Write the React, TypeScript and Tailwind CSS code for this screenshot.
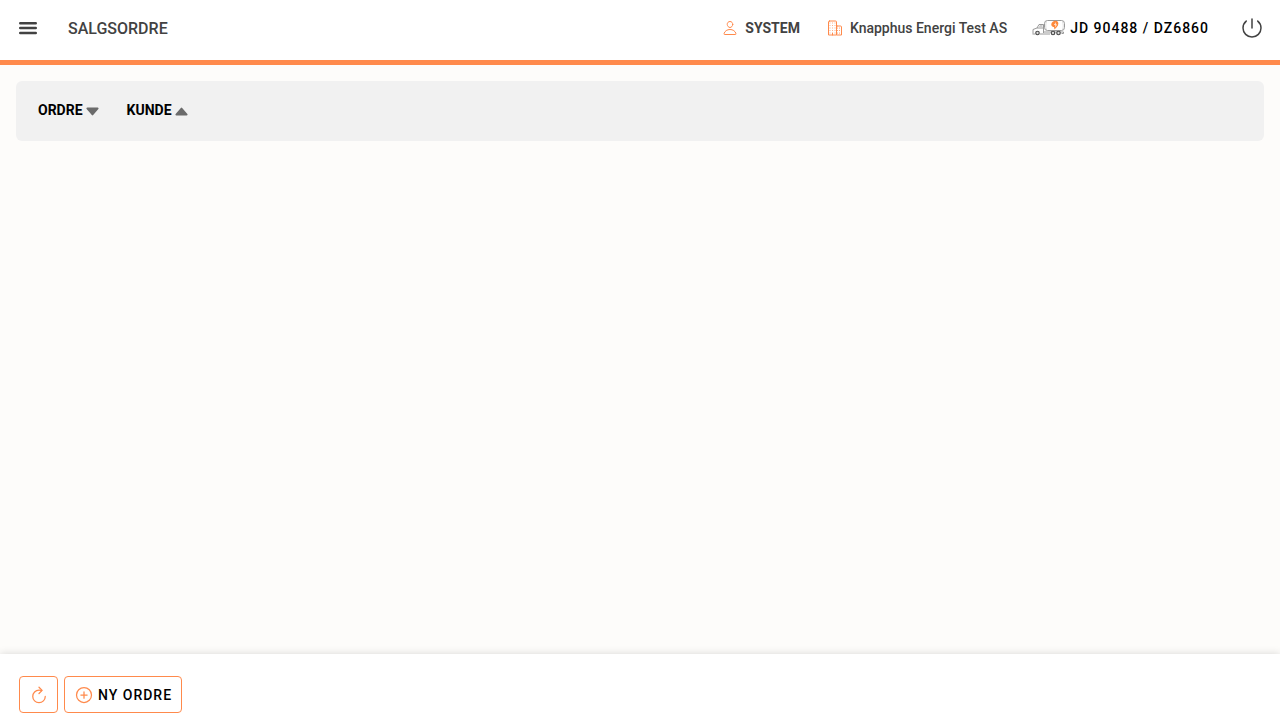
import {
    IoAddCircleOutline,
    IoBusinessOutline,
    IoCaretDown,
    IoCaretUp,
    IoPersonOutline,
    IoPowerOutline,
    IoRefreshOutline,
} from "react-icons/io5";

const MenuIcon = () => (
    <svg className="size-6" viewBox="0 0 24 24" fill="none" stroke="currentColor" strokeWidth="2.4" strokeLinecap="round" aria-hidden="true">
        <path d="M4.2 7.2h15.6M4.2 12h15.6M4.2 17h15.6" />
    </svg>
);

const TruckIcon = () => (
    <svg className="h-4 w-[33px]" viewBox="0 0 66 32" fill="none" aria-hidden="true">
        <rect x="25" y="1" width="40" height="20" rx="6" stroke="#8f8f8f" strokeWidth="1.8" />
        <path d="M2 27v-8l8-3 4-7h9v17M1 28h5M16 28h20M24 24h39v3h-4M10 16h12" stroke="#8f8f8f" strokeWidth="1.8" />
        <path d="M29 3c-2 5-2 12 0 17M61 3c2 5 2 12 0 17" stroke="#bbb" />
        <path d="M13 15l3-5h5v5z" fill="#ccc" />
        <circle cx="11" cy="26" r="3.5" fill="#ddd" stroke="#4d4d4d" strokeWidth="2.4" />
        <circle cx="42" cy="26" r="3.5" fill="#ddd" stroke="#4d4d4d" strokeWidth="2.4" />
        <circle cx="53" cy="26" r="3.5" fill="#ddd" stroke="#4d4d4d" strokeWidth="2.4" />
        <path d="M45 19l-1-5c-5 0-7-5-4-9 3-4 9-5 12-1 2 4 0 9-7 15z" fill="#ff8a3c" />
        <path d="M48 4l-4 6h3l-1 5 4-6h-3z" fill="#fff" />
    </svg>
);

const Header = () => (
    <header className="flex h-[65px] items-start border-b-5 border-[#ff8a4c] bg-white px-4 pt-4 text-sm font-medium text-[#424242]">
        <button type="button" aria-label="Meny" className="cursor-pointer">
            <MenuIcon />
        </button>
        <h1 className="ml-7 text-base leading-[26px]">SALGSORDRE</h1>
        <div className="ml-auto flex h-6 items-center">
            <div className="flex items-center gap-[7px]">
                <IoPersonOutline className="size-4 text-[#ff8a4c]" />
                <span className="font-bold">SYSTEM</span>
            </div>
            <div className="ml-[27px] flex items-center gap-[7px]">
                <IoBusinessOutline className="size-4 text-[#ff8a4c]" />
                <span>Knapphus Energi Test AS</span>
            </div>
            <button type="button" className="ml-[25px] flex cursor-pointer items-center gap-[5px] tracking-[1px] text-black">
                <TruckIcon />
                JD 90488 / DZ6860
            </button>
            <button type="button" aria-label="Logg ut" className="ml-[31px] cursor-pointer">
                <IoPowerOutline className="size-6" />
            </button>
        </div>
    </header>
);

const SortBar = () => (
    <div className="flex h-15 items-center gap-[25px] rounded-md bg-[#f1f1f1] px-[22px] text-sm leading-4 font-bold text-black">
        <button type="button" className="flex cursor-pointer items-start">
            ORDRE
            <IoCaretDown className="size-[19px] text-[#6b6b6b]" />
        </button>
        <button type="button" className="flex cursor-pointer items-start">
            KUNDE
            <IoCaretUp className="size-[19px] text-[#6b6b6b]" />
        </button>
    </div>
);

const Footer = () => (
    <footer className="flex h-[66px] items-start gap-[6px] bg-white px-[19px] pt-[22px] shadow-[0_0_8px_rgba(0,0,0,0.15)]">
        <button
            type="button"
            aria-label="Oppdater"
            className="flex h-[37px] w-[39px] cursor-pointer items-center justify-center rounded border border-[#ff8a4c]"
        >
            <IoRefreshOutline className="size-5 text-[#ff8a4c]" />
        </button>
        <button
            type="button"
            className="flex h-[37px] cursor-pointer items-center gap-1 rounded border border-[#ff8a4c] px-[9px] text-sm font-medium tracking-[1px] text-black"
        >
            <IoAddCircleOutline className="size-5 text-[#ff8a4c]" />
            NY ORDRE
        </button>
    </footer>
);

export default function App() {
    return (
        <div className="flex min-h-screen flex-col bg-[#fdfcfa] font-[Roboto,sans-serif]">
            <Header />
            <main className="flex-1 p-4">
                <SortBar />
            </main>
            <Footer />
        </div>
    );
}
